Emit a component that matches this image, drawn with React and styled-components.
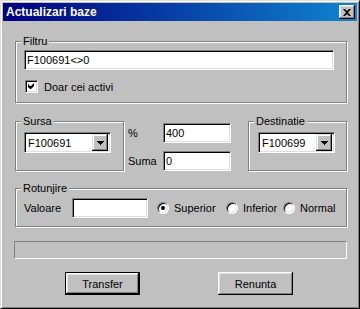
import React from "react";
import styled, { createGlobalStyle } from "styled-components";

const FACE = "#c0c0c0";

const GlobalStyle = createGlobalStyle`
  html, body {
    margin: 0;
    padding: 0;
    background: ${FACE};
  }
  body {
    font-family: "Liberation Sans", Arial, sans-serif;
    font-size: 11px;
    color: #000;
  }
`;

const Window = styled.div`
  width: 360px;
  height: 309px;
  box-sizing: border-box;
  background: ${FACE};
  border: 1px solid;
  border-color: #dfdfdf #000 #000 #dfdfdf;
  box-shadow: inset 1px 1px 0 #fff, inset -1px -1px 0 #808080;
  padding: 2px;
  display: flex;
  flex-direction: column;
`;

const TitleBar = styled.div`
  height: 18px;
  flex: none;
  display: flex;
  align-items: center;
  justify-content: space-between;
  padding: 0 2px 0 3px;
  background: linear-gradient(to right, #000080, #1084d0);
  color: #fff;
  font-weight: bold;
  font-size: 12px;
`;

const CloseButton = styled.div`
  width: 16px;
  height: 14px;
  box-sizing: border-box;
  background: ${FACE};
  box-shadow: inset -1px -1px 0 #000, inset 1px 1px 0 #fff,
    inset -2px -2px 0 #808080, inset 2px 2px 0 #dfdfdf;
  display: flex;
  align-items: center;
  justify-content: center;
`;

const Body = styled.div`
  flex: 1;
  display: flex;
  flex-direction: column;
  padding: 20px 10px 0 12px;
`;

const Group = styled.div`
  position: relative;
  box-sizing: border-box;
  border: 1px solid #808080;
  box-shadow: inset 1px 1px 0 #fff, 1px 1px 0 #fff;
  margin-top: ${(p) => p.$top || 0}px;
  width: ${(p) => (p.$width ? `${p.$width}px` : "auto")};
  height: ${(p) => (p.$height ? `${p.$height}px` : "auto")};
  padding: ${(p) => p.$pad || "0"};
  display: flex;
  flex-direction: ${(p) => (p.$row ? "row" : "column")};
  align-items: ${(p) => (p.$row ? "center" : "stretch")};
`;

const Caption = styled.span`
  position: absolute;
  top: -7px;
  left: 5px;
  padding: 0 2px;
  line-height: 13px;
  background: ${FACE};
`;

const Sunken = styled.div`
  box-sizing: border-box;
  background: #fff;
  border: 1px solid;
  border-color: #808080 #fff #fff #808080;
  box-shadow: inset 1px 1px 0 #000, inset -1px -1px 0 #dfdfdf;
`;

const TextBox = styled.input`
  box-sizing: border-box;
  width: ${(p) => p.$width}px;
  height: 20px;
  margin: 0;
  padding: 0 2px 0 2px;
  background: #fff;
  border: 1px solid;
  border-color: #808080 #fff #fff #808080;
  box-shadow: inset 1px 1px 0 #000, inset -1px -1px 0 #dfdfdf;
  font-family: "Liberation Sans", Arial, sans-serif;
  font-size: 11px;
  color: #000;
  outline: none;
`;

const CheckRow = styled.label`
  display: flex;
  align-items: center;
  gap: 6px;
  margin: 10px 0 0 1px;
  height: 13px;
`;

const CheckBox = styled(Sunken)`
  width: 13px;
  height: 13px;
  display: flex;
  align-items: center;
  justify-content: center;
`;

const Row = styled.div`
  display: flex;
  align-items: flex-start;
  margin-top: ${(p) => p.$top || 0}px;
`;

const MidColumn = styled.div`
  display: grid;
  grid-template-columns: 35px 68px;
  row-gap: 8px;
  align-items: center;
  margin: 2px 0 0 4px;
`;

const ComboBox = styled(Sunken)`
  width: ${(p) => p.$width}px;
  height: 21px;
  display: flex;
  align-items: center;
  padding: 2px;
`;

const ComboText = styled.span`
  flex: 1;
  padding-left: 1px;
`;

const ComboArrow = styled.div`
  width: 16px;
  height: 17px;
  box-sizing: border-box;
  background: ${FACE};
  box-shadow: inset -1px -1px 0 #000, inset 1px 1px 0 #dfdfdf,
    inset -2px -2px 0 #808080, inset 2px 2px 0 #fff;
  display: flex;
  align-items: center;
  justify-content: center;
`;

const FieldLabel = styled.span`
  width: ${(p) => p.$width}px;
  flex: none;
`;

const RadioItem = styled.label`
  display: flex;
  align-items: center;
  gap: 5px;
  width: ${(p) => p.$width}px;
  flex: none;
`;

const RadioCircle = styled.span`
  width: 12px;
  height: 12px;
  box-sizing: border-box;
  border-radius: 50%;
  background: #fff;
  border: 1px solid;
  border-color: #808080 #fff #fff #808080;
  box-shadow: inset 1px 1px 0 #000, inset -1px -1px 0 #dfdfdf;
  display: flex;
  align-items: center;
  justify-content: center;
  &::after {
    content: "";
    display: ${(p) => (p.$on ? "block" : "none")};
    width: 4px;
    height: 4px;
    border-radius: 50%;
    background: #000;
  }
`;

const StatusBar = styled.div`
  height: 18px;
  box-sizing: border-box;
  margin: 14px 0 0 -1px;
  border: 1px solid;
  border-color: #808080 #fff #fff #808080;
`;

const ButtonRow = styled.div`
  display: flex;
  gap: 78px;
  padding-left: 50px;
  margin-top: 13px;
`;

const Button = styled.button`
  width: 75px;
  height: 23px;
  box-sizing: border-box;
  margin: 0;
  padding: 0;
  background: ${FACE};
  font-family: "Liberation Sans", Arial, sans-serif;
  font-size: 11px;
  color: #000;
  border: ${(p) => (p.$default ? "1px solid #000" : "none")};
  box-shadow: inset -1px -1px 0 #000, inset 1px 1px 0 #fff,
    inset -2px -2px 0 #808080, inset 2px 2px 0 #dfdfdf;
`;

const DownArrow = () => (
  <svg width="7" height="4" viewBox="0 0 7 4">
    <path d="M0 0h7v1H0zM1 1h5v1H1zM2 2h3v1H2zM3 3h1v1H3z" fill="#000" />
  </svg>
);

const Combo = ({ value, width }) => (
  <ComboBox $width={width}>
    <ComboText>{value}</ComboText>
    <ComboArrow>
      <DownArrow />
    </ComboArrow>
  </ComboBox>
);

export default function App() {
  return (
    <>
      <GlobalStyle />
      <Window>
        <TitleBar>
          <span>Actualizari baze</span>
          <CloseButton>
            <svg width="8" height="7" viewBox="0 0 8 7">
              <path
                d="M0 0h2l2 2 2-2h2L5 3.5 8 7H6L4 5 2 7H0l3-3.5z"
                fill="#000"
              />
            </svg>
          </CloseButton>
        </TitleBar>
        <Body>
          <Group $top={0} $pad="8px 12px 9px 8px">
            <Caption>Filtru</Caption>
            <TextBox $width={310} defaultValue="F100691<>0" />
            <CheckRow>
              <CheckBox>
                <svg width="7" height="7" viewBox="0 0 7 7">
                  <path
                    d="M6 0v3L3 6H2L0 4V1l2 2h1L6 0z"
                    fill="#000"
                  />
                </svg>
              </CheckBox>
              <span>Doar cei activi</span>
            </CheckRow>
          </Group>

          <Row $top={18}>
            <Group $width={109} $height={50} $pad="10px 0 0 8px">
              <Caption>Sursa</Caption>
              <Combo value="F100691" width={87} />
            </Group>
            <MidColumn>
              <span>%</span>
              <TextBox $width={68} defaultValue="400" />
              <span>Suma</span>
              <TextBox $width={68} defaultValue="0" />
            </MidColumn>
            <Group
              $width={99}
              $height={50}
              $pad="10px 0 0 9px"
              style={{ marginLeft: "auto" }}
            >
              <Caption>Destinatie</Caption>
              <Combo value="F100699" width={77} />
            </Group>
          </Row>

          <Group $top={17} $height={39} $pad="0 0 0 8px" $row>
            <Caption>Rotunjire</Caption>
            <FieldLabel $width={48}>Valoare</FieldLabel>
            <TextBox $width={76} />
            <span style={{ width: 9 }} />
            <RadioItem $width={69}>
              <RadioCircle $on />
              Superior
            </RadioItem>
            <RadioItem $width={57}>
              <RadioCircle />
              Inferior
            </RadioItem>
            <RadioItem $width={60}>
              <RadioCircle />
              Normal
            </RadioItem>
          </Group>

          <StatusBar />

          <ButtonRow>
            <Button $default>Transfer</Button>
            <Button>Renunta</Button>
          </ButtonRow>
        </Body>
      </Window>
    </>
  );
}
